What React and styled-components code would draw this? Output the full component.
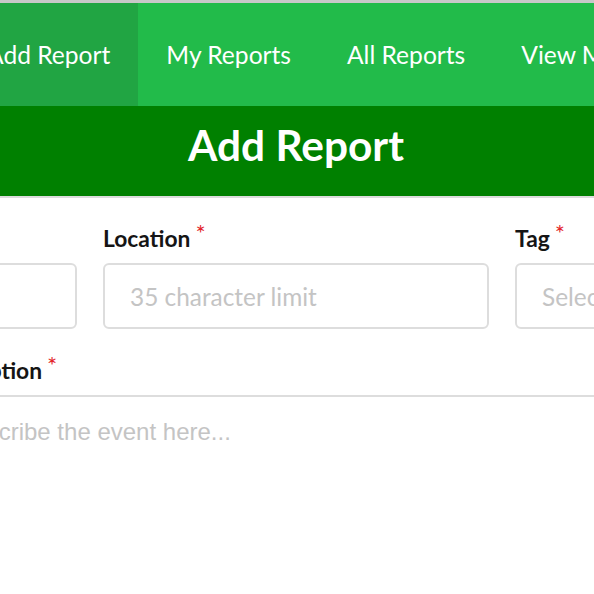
import styled, { createGlobalStyle } from "styled-components";

const GlobalStyle = createGlobalStyle`
  html, body {
    margin: 0;
    padding: 0;
    background: #fff;
    overflow: hidden;
  }
  body {
    font-family: Lato, "Open Sans", sans-serif;
  }
  * {
    box-sizing: border-box;
  }
`;

// the page is wider than the window; the window shows its middle
const Viewport = styled.div`
  width: 594px;
  overflow: hidden;
`;

const Page = styled.div`
  width: 1260px;
  margin-left: -334px;
  border-top: 3px solid #c8c8c8;
`;

const Nav = styled.nav`
  display: flex;
  background: #22bb4a;
  padding-left: 293px;
`;

const NavItem = styled.a`
  display: block;
  padding: 0 28px;
  height: 103px;
  line-height: 103px;
  font-size: 24.6px;
  color: #fff;
  text-decoration: none;
  white-space: nowrap;
  background: ${({ $active }) => ($active ? "#21a543" : "transparent")};
`;

const Banner = styled.header`
  background: #008000;
  height: 92px;
  padding-bottom: 14px;
  display: flex;
  align-items: center;
  justify-content: center;
  border-bottom: 2px solid #dcdcdc;
`;

const Title = styled.h1`
  margin: 0;
  color: #fff;
  font-size: 42.4px;
  font-weight: 700;
`;

const Form = styled.form`
  padding: 25px 25px 0;
`;

const FieldRow = styled.div`
  display: grid;
  grid-template-columns: repeat(3, 1fr);
  gap: 26px;
`;

const Field = styled.div`
  display: flex;
  flex-direction: column;
`;

const Label = styled.label`
  font-size: 22.8px;
  font-weight: 700;
  color: #151515;
  line-height: 30px;
  margin-bottom: 10px;

  &::after {
    content: "*";
    color: #e3262b;
    font-size: 24px;
    font-weight: 400;
    vertical-align: super;
    line-height: 0;
    margin-left: 5px;
    position: relative;
    top: 4px;
  }
`;

const Input = styled.input`
  height: 66px;
  border: 2px solid #dddddd;
  border-radius: 6px;
  padding: 0 25px;
  font-family: Lato, sans-serif;
  font-size: 24.4px;
  color: #333;

  &::placeholder {
    color: #c4c4c4;
  }
`;

const DescBlock = styled.div`
  width: 744px;
  margin: 26px auto 0;
  display: flex;
  flex-direction: column;
`;

const DescLabel = styled(Label)`
  margin-bottom: 10px;
`;

const TextArea = styled.textarea`
  height: 260px;
  border: 2px solid #dddddd;
  border-left: none;
  border-right: none;
  padding: 21px 32px;
  font-family: "Liberation Sans", Arial, sans-serif;
  font-size: 24px;
  resize: none;

  &::placeholder {
    color: #c4c4c4;
  }
`;

export default function App() {
  return (
    <>
      <GlobalStyle />
      <Viewport>
        <Page>
          <Nav>
            <NavItem $active href="#">Add Report</NavItem>
            <NavItem href="#">My Reports</NavItem>
            <NavItem href="#">All Reports</NavItem>
            <NavItem href="#">View Map</NavItem>
          </Nav>
          <Banner>
            <Title>Add Report</Title>
          </Banner>
          <Form>
            <FieldRow>
              <Field>
                <Label>Title</Label>
                <Input placeholder="35 character limit" />
              </Field>
              <Field>
                <Label>Location</Label>
                <Input placeholder="35 character limit" />
              </Field>
              <Field>
                <Label>Tag</Label>
                <Input placeholder="Select a tag" />
              </Field>
            </FieldRow>
            <DescBlock>
              <DescLabel>Description</DescLabel>
              <TextArea placeholder="Describe the event here..." />
            </DescBlock>
          </Form>
        </Page>
      </Viewport>
    </>
  );
}
